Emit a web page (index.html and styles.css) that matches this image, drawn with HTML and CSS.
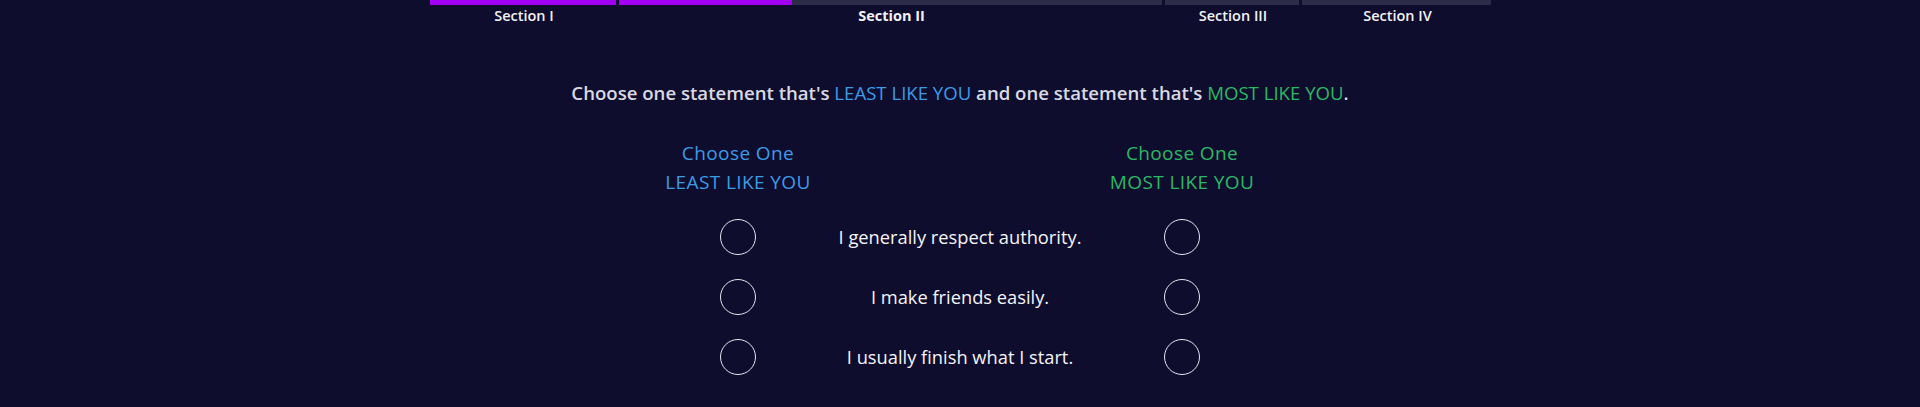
FILE: index.html
```html
<!DOCTYPE html>
<html lang="en">
<head>
<meta charset="utf-8">
<title>Assessment</title>
<link rel="stylesheet" href="styles.css">
</head>
<body>
<div class="progress">
  <div class="seg seg-1">
    <div class="bar"><div class="fill" style="width:100%"></div></div>
    <div class="label">Section I</div>
  </div>
  <div class="seg seg-2">
    <div class="bar"><div class="fill" style="width:173px"></div></div>
    <div class="label current">Section II</div>
  </div>
  <div class="seg seg-3">
    <div class="bar"></div>
    <div class="label">Section III</div>
  </div>
  <div class="seg seg-4">
    <div class="bar"></div>
    <div class="label">Section IV</div>
  </div>
</div>

<main class="question">
  <p class="prompt">Choose one statement that's <span class="least">LEAST LIKE YOU</span> and one statement that's <span class="most">MOST LIKE YOU</span>.</p>

  <div class="grid">
    <div class="colhead least"><div>Choose One</div><div>LEAST LIKE YOU</div></div>
    <div></div>
    <div class="colhead most"><div>Choose One</div><div>MOST LIKE YOU</div></div>

    <div class="cell"><span class="radio"></span></div>
    <div class="statement">I generally respect authority.</div>
    <div class="cell"><span class="radio"></span></div>

    <div class="cell"><span class="radio"></span></div>
    <div class="statement">I make friends easily.</div>
    <div class="cell"><span class="radio"></span></div>

    <div class="cell"><span class="radio"></span></div>
    <div class="statement">I usually finish what I start.</div>
    <div class="cell"><span class="radio"></span></div>
  </div>
</main>
</body>
</html>
```
FILE: styles.css
```css
html, body {
  margin: 0;
  padding: 0;
}
body {
  background: #0f0d2e;
  font-family: "Open Sans", Lato, sans-serif;
  color: #ffffff;
  height: 407px;
  overflow: hidden;
}
.progress {
  width: 1061px;
  margin: 0 auto;
  display: flex;
  gap: 3px;
}
.seg-1 { width: 186px; }
.seg-2 { width: 543px; }
.seg-3 { width: 134px; }
.seg-4 { width: 189px; }
.bar {
  height: 5px;
  background: #2d2b48;
  display: flex;
}
.fill {
  height: 100%;
  background: #a100f2;
}
.label {
  text-align: center;
  font-size: 14.5px;
  line-height: 17px;
  font-weight: 600;
  padding-top: 2px;
  padding-left: 3px;
  color: #f2f2f5;
}
.label.current {
  font-weight: 700;
}
.question {
  display: flex;
  flex-direction: column;
  align-items: center;
}
.prompt {
  margin: 57px 0 0;
  font-size: 18.6px;
  line-height: 24px;
  font-weight: 600;
  color: #d9d9e2;
}
.prompt .least, .prompt .most { font-weight: 400; }
.least { color: #3d9be6; }
.most { color: #2bb865; }
.grid {
  margin-top: 34px;
  display: grid;
  grid-template-columns: 148px 296px 148px;
  grid-auto-rows: 60px;
  grid-template-rows: 68px;
  align-items: center;
  justify-items: center;
}
.colhead {
  align-self: start;
  text-align: center;
  font-size: 19px;
  line-height: 29px;
  letter-spacing: 0.4px;
  white-space: nowrap;
}
.cell {
  display: flex;
  justify-content: center;
  align-items: center;
}
.radio {
  width: 34px;
  height: 34px;
  border: 1px solid #e6e6ee;
  border-radius: 50%;
}
.statement {
  font-size: 18.3px;
  line-height: 24px;
  color: #f4f4f8;
  white-space: nowrap;
}
```
